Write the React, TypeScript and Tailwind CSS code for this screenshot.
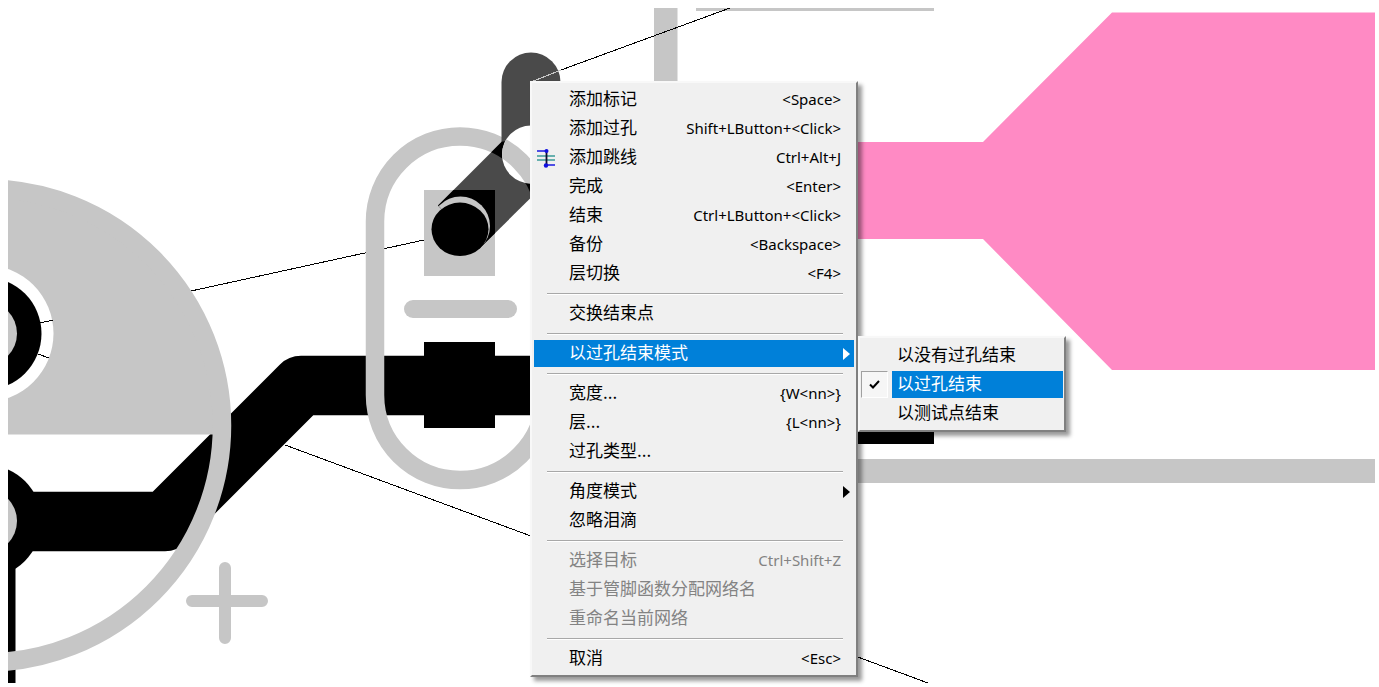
import React, { useState } from 'react';

type MenuRow = {
  label: string;
  shortcut?: string;
  icon?: boolean;
  submenu?: boolean;
  disabled?: boolean;
};

const groups: MenuRow[][] = [
  [
    { label: '添加标记', shortcut: '<Space>' },
    { label: '添加过孔', shortcut: 'Shift+LButton+<Click>' },
    { label: '添加跳线', shortcut: 'Ctrl+Alt+J', icon: true },
    { label: '完成', shortcut: '<Enter>' },
    { label: '结束', shortcut: 'Ctrl+LButton+<Click>' },
    { label: '备份', shortcut: '<Backspace>' },
    { label: '层切换', shortcut: '<F4>' },
  ],
  [{ label: '交换结束点' }],
  [{ label: '以过孔结束模式', submenu: true }],
  [
    { label: '宽度...', shortcut: '{W<nn>}' },
    { label: '层...', shortcut: '{L<nn>}' },
    { label: '过孔类型...' },
  ],
  [{ label: '角度模式', submenu: true }, { label: '忽略泪滴' }],
  [
    { label: '选择目标', shortcut: 'Ctrl+Shift+Z', disabled: true },
    { label: '基于管脚函数分配网络名', disabled: true },
    { label: '重命名当前网络', disabled: true },
  ],
  [{ label: '取消', shortcut: '<Esc>' }],
];

const endModes = ['以没有过孔结束', '以过孔结束', '以测试点结束'];

const OPEN_ITEM = '以过孔结束模式';

function JumperIcon() {
  return (
    <svg width="20" height="20" viewBox="0 0 20 20" fill="none" aria-hidden="true">
      <path d="M1 8h18M1 12h18" stroke="#3a9b98" strokeWidth="1.5" />
      <path d="M1 3h10M10 17h9" stroke="#1a1ae0" strokeWidth="1.6" />
      <path d="M10.500 2v15" stroke="#101030" strokeWidth="1.8" />
      <circle cx="10.500" cy="3" r="2" fill="#1010e0" />
      <circle cx="10" cy="17.500" r="2.200" fill="#1010e0" />
    </svg>
  );
}

// Copper, silkscreen and rats-nest lines of the board
function BoardCanvas() {
  return (
    <svg
      className="absolute inset-0 h-full w-full"
      viewBox="0 0 1379 687"
      preserveAspectRatio="xMinYMin slice"
      fill="none"
      aria-hidden="true"
    >
      <defs>
        <clipPath id="view">
          <rect x="8" y="8" width="1367" height="675" />
        </clipPath>
        <clipPath id="segment">
          <path d="M438 205.500L502 141.500L560 141.500L560 169L480 248Z" />
        </clipPath>
        <clipPath id="via">
          <circle cx="531" cy="154.500" r="29" />
        </clipPath>
      </defs>

      <g clipPath="url(#view)">
        {/* rats-nest */}
        <g stroke="#000" shapeRendering="crispEdges">
          <path d="M191 291L424 240" />
          <path d="M285 445L928 683" />
        </g>

        {/* pink plane */}
        <path d="M850 142H983L1112 12.500H1375V370H1112L983 239H850Z" fill="#ff8ac4" />

        {/* traces and pads */}
        <path d="M-15 521.500H165L301 385.500H600" stroke="#000" strokeWidth="59.500" strokeLinejoin="round" />
        <rect x="424" y="342" width="71" height="86" fill="#000" />
        <rect x="850" y="358" width="84" height="86" fill="#000" />
        <rect x="8" y="540" width="7.500" height="143" fill="#000" />
        <circle cx="-15" cy="521" r="56.500" fill="#000" />
        <circle cx="-15" cy="521" r="32" fill="#c6c6c6" />

        {/* electrolytic cap outline */}
        <path d="M-15 188.500H-15A237 237 0 0 1 222 434.500H-15Z" fill="#c6c6c6" />
        <circle cx="-15" cy="425.500" r="237" stroke="#c6c6c6" strokeWidth="18.500" />
        <circle cx="-15" cy="333.500" r="68.500" fill="#fff" />
        <circle cx="-15" cy="333.500" r="56.500" fill="#000" />
        <circle cx="-15" cy="333.500" r="32" fill="#c6c6c6" />
        <path d="M40 323L53 320M38 354L49 358" stroke="#000" shapeRendering="crispEdges" />

        {/* polarity marks */}
        <path d="M192 601H262M225 568V638" stroke="#c6c6c6" strokeWidth="12" strokeLinecap="round" />
        <path d="M413 309H508" stroke="#c6c6c6" strokeWidth="18" strokeLinecap="round" />

        {/* board silkscreen */}
        <path d="M654 8H677.500V100H654ZM696 8H934V11H696ZM850 459H1375V483H850Z" fill="#c6c6c6" />
        <rect x="375" y="136.500" width="170" height="343.500" rx="85" stroke="#c6c6c6" strokeWidth="18.500" />
        <rect x="424" y="190" width="71" height="86" fill="#c6c6c6" />

        {/* segment being routed */}
        <path d="M531 82V155" stroke="#4a4a4a" strokeWidth="59" strokeLinecap="round" />
        <path d="M438 205.500L502 141.500L560 141.500L560 169L480 248Z" fill="#4a4a4a" />
        <g clipPath="url(#segment)">
          <rect x="375" y="136.500" width="170" height="343.500" rx="85" stroke="#000" strokeWidth="18.500" />
          <rect x="424" y="190" width="71" height="86" fill="#000" />
          <circle cx="460.500" cy="226" r="29.500" fill="#c6c6c6" />
        </g>
        <g clipPath="url(#via)">
          <rect x="500" y="120" width="62" height="70" fill="#fff" />
          <rect x="375" y="136.500" width="170" height="343.500" rx="85" stroke="#c6c6c6" strokeWidth="18.500" />
        </g>
        <ellipse cx="460" cy="229.300" rx="28.500" ry="26.700" fill="#000" />
        <path d="M531 82L561 70" stroke="#c6c6c6" shapeRendering="crispEdges" />
        <path d="M561 70L730 8" stroke="#000" shapeRendering="crispEdges" />
      </g>
    </svg>
  );
}

function EndModeMenu() {
  const [mode, setMode] = useState('以过孔结束');

  return (
    <div className="absolute left-full -top-0.5 z-10 ml-1 w-[208px] border-2 border-t-[#f8f8f8] border-l-[#f8f8f8] border-r-[#808080] border-b-[#808080] bg-[#f0f0f0] pt-0.5 pb-[3px] text-black shadow-[4px_4px_4px_rgba(0,0,0,0.4)]">
      {endModes.map((name) => (
        <label key={name} className="flex h-[29px] items-end gap-1 pr-px pl-px">
          <span className="grid shrink-0">
            <input
              type="radio"
              name="end-mode"
              checked={mode === name}
              onChange={() => setMode(name)}
              className="col-start-1 row-start-1 h-[27px] w-[27px] appearance-none checked:border checked:border-t-[#a0a0a0] checked:border-r-white checked:border-b-white checked:border-l-[#a0a0a0] checked:bg-[#f6f6f6]"
            />
            {mode === name && (
              <svg className="pointer-events-none col-start-1 row-start-1 place-self-center" width="11" height="11" viewBox="0 0 11 11" fill="none" aria-hidden="true">
                <path d="M1 5.500L4 8.500L10 2" stroke="#000" strokeWidth="2" />
              </svg>
            )}
          </span>
          <span className={`h-[27px] flex-1 pl-[5px] leading-6 ${mode === name ? 'bg-[#0080d9] text-white' : ''}`}>
            {name}
          </span>
        </label>
      ))}
    </div>
  );
}

function MenuItem({ row }: { row: MenuRow }) {
  const open = row.label === OPEN_ITEM;

  return (
    <li className="relative flex h-[29px] items-end">
      <button
        type="button"
        disabled={row.disabled}
        className={`flex h-[27px] w-full items-start pr-[13px] text-left leading-6 disabled:text-[#838383] ${open ? 'bg-[#0080d9] text-white' : ''}`}
      >
        <span className="w-[35px] shrink-0 self-center pl-0.5">{row.icon && <JumperIcon />}</span>
        <span className="flex-1 whitespace-nowrap">{row.label}</span>
        {row.shortcut && (
          <span className="font-['Noto_Sans',sans-serif] text-[15px] leading-[27px] whitespace-nowrap">{row.shortcut}</span>
        )}
        {row.submenu && (
          <svg className="-mr-2.5 self-center" width="8" height="12" viewBox="0 0 8 12" fill="currentColor" aria-hidden="true">
            <path d="M0 0L7 6L0 12Z" />
          </svg>
        )}
      </button>
      {open && <EndModeMenu />}
    </li>
  );
}

export default function App() {
  return (
    <main className="relative min-h-screen overflow-hidden bg-white font-['Noto_Sans_CJK_SC',sans-serif] text-[17px] text-black">
      <BoardCanvas />

      <nav className="absolute top-[81px] left-[530px] w-[328px] border-2 border-t-[#f8f8f8] border-r-[#808080] border-b-[#808080] border-l-[#f8f8f8] bg-[#f0f0f0] px-0.5 pt-px pb-[3px] shadow-[4px_4px_4px_rgba(0,0,0,0.4)]">
        {groups.map((rows, idx) => (
          <React.Fragment key={idx}>
            {idx > 0 && <hr className="mt-1.5 mr-[11px] mb-[3px] ml-[13px] h-0.5 border-t border-b border-t-[#a8a8a8] border-b-white" />}
            <ul>
              {rows.map((row) => (
                <MenuItem key={row.label} row={row} />
              ))}
            </ul>
          </React.Fragment>
        ))}
      </nav>
    </main>
  );
}
